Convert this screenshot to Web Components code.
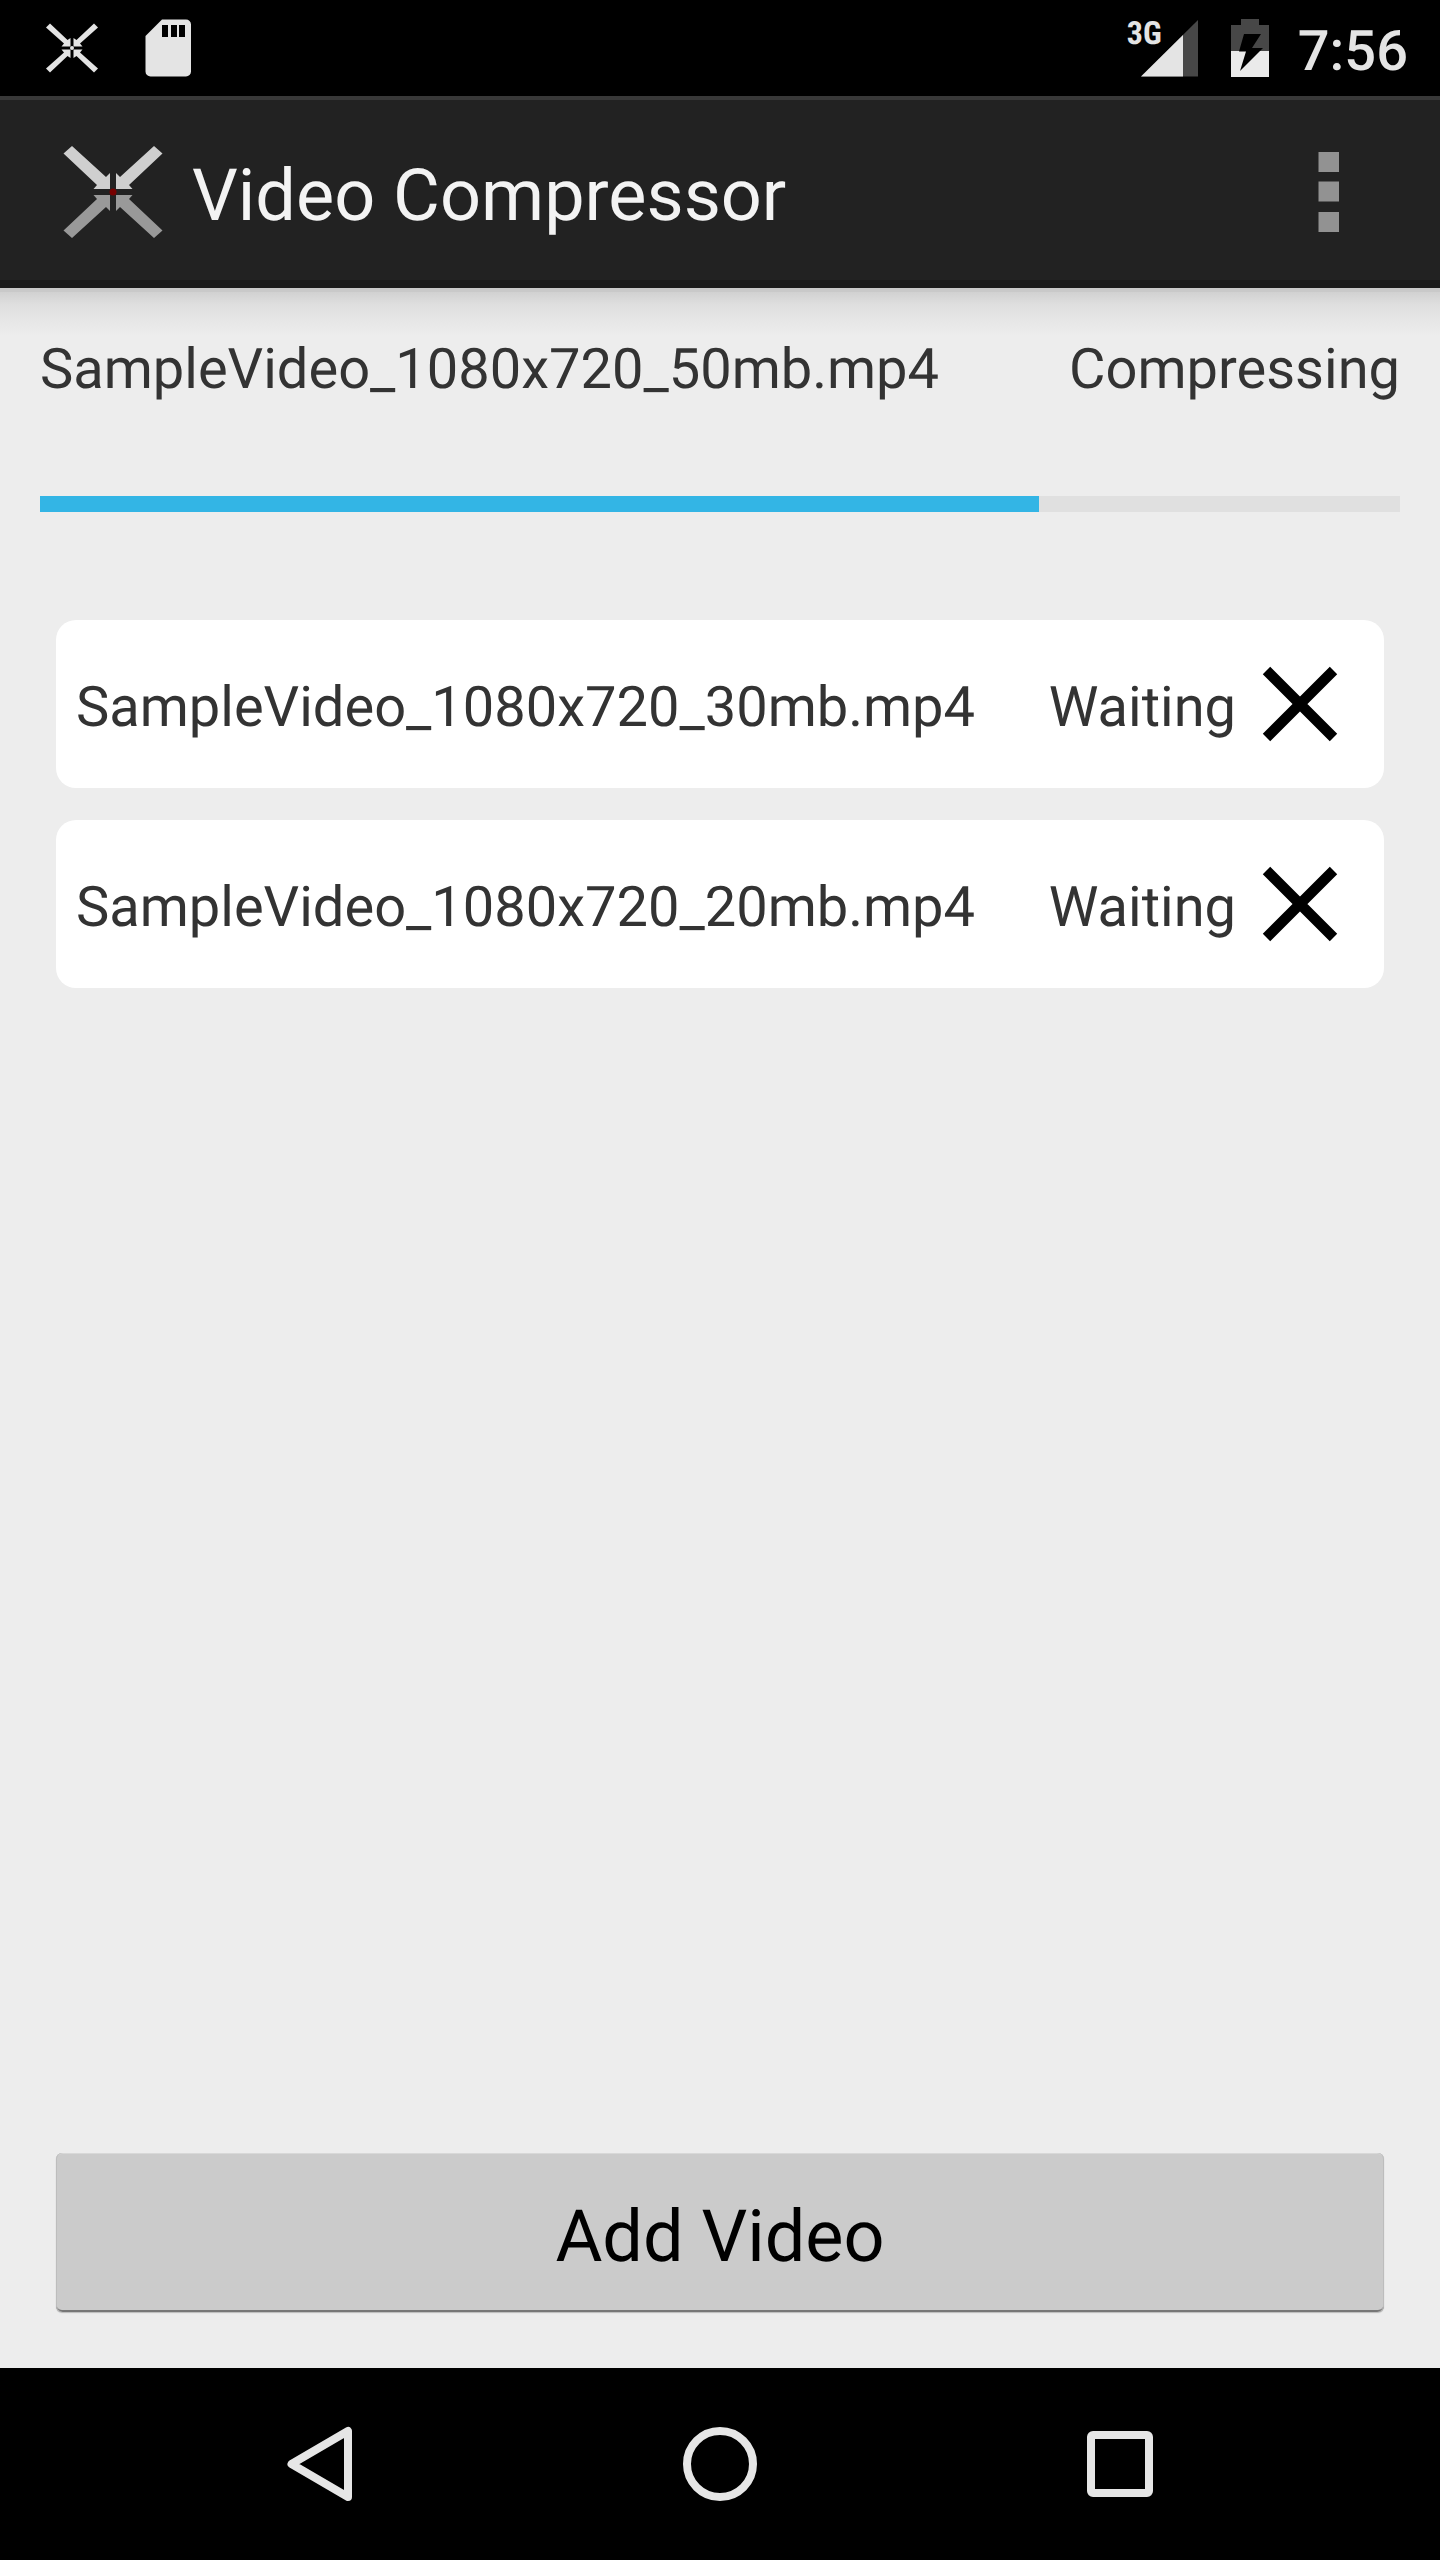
<!DOCTYPE html>
<html lang="en">
<head>
<meta charset="utf-8">
<meta name="viewport" content="width=device-width, initial-scale=1">
<title>Video Compressor</title>
<style>
  body { margin: 0; font-family: Roboto, "Noto Sans", sans-serif; text-rendering: geometricPrecision; }
</style>
</head>
<body>
<video-compressor-app></video-compressor-app>

<template id="app">
  <style>
    :host { display: flex; flex-direction: column; min-height: 100vh; background: #ededed; color: #333; font-size: 56px; line-height: 66px; }
    main { flex: 1; display: flex; flex-direction: column; padding: 42px 40px 56px; background: linear-gradient(#c9c9c9 4px, #d1d1d1 4px, #dedede 16px, #e6e6e6 32px, #ededed 48px); }
    .queue { list-style: none; margin: 108px 16px 0; padding: 0; display: flex; flex-direction: column; gap: 32px; }
    add-button { margin: auto 16px 0; }
  </style>
  <status-bar>7:56</status-bar>
  <app-bar>Video Compressor</app-bar>
  <main>
    <active-job value="999" max="1360"><span slot="name">SampleVideo_1080x720_50mb.mp4</span><span slot="state">Compressing</span></active-job>
    <ul class="queue">
      <li><queue-item><span slot="name">SampleVideo_1080x720_30mb.mp4</span><span slot="state">Waiting</span></queue-item></li>
      <li><queue-item><span slot="name">SampleVideo_1080x720_20mb.mp4</span><span slot="state">Waiting</span></queue-item></li>
    </ul>
    <add-button>Add Video</add-button>
  </main>
  <nav-bar></nav-bar>
</template>

<template id="status">
  <style>
    :host { display: flex; align-items: center; height: 96px; padding: 0 32px 0 24px; background: #000; color: #e4e4e4; }
    svg { display: block; flex: none; }
    .network { display: flex; align-items: flex-start; margin-left: auto; }
    .type { font: 700 32px/32px "Roboto Condensed", Roboto, sans-serif; margin-right: -22px; margin-top: 17px; }
    .battery { margin: 0 26px 0 28px; }
    .clock { font-weight: 500; padding-top: 6px; }
  </style>
  <svg width="96" height="96" viewBox="0 0 96 96" fill="#e4e4e4" aria-hidden="true">
    <path d="M26 23.5 43.5 40l3-2v8.500h-9l2.500-3L22 27.500z"/>
    <path d="M70 23.500 52.500 40l-3-2v8.500h9l-2.500-3L74 27.500z"/>
    <path d="M26 72.500 43.500 56l3 2v-8.500h-9l2.500 3L22 68.500z"/>
    <path d="M70 72.500 52.500 56l-3 2v-8.500h9l-2.500 3L74 68.500z"/>
    <circle cx="48" cy="48" r="2"/>
  </svg>
  <svg width="96" height="96" viewBox="0 0 96 96" aria-hidden="true">
    <path fill="#e4e4e4" fill-rule="evenodd" d="M42 19.500h24a5 5 0 0 1 5 5v47a5 5 0 0 1-5 5H30.500a5 5 0 0 1-5-5V36zM42 25v12h6V25zm9 0v12h6V25zm8 0v12h6V25z"/>
  </svg>
  <div class="network">
    <span class="type">3G</span>
    <svg width="60" height="96" viewBox="0 0 60 96" aria-hidden="true"><path fill="#474747" d="M58 20v56.500H1z"/><path fill="#e4e4e4" d="M43 35v41.500H1z"/></svg>
  </div>
  <svg class="battery" width="44" height="96" viewBox="0 0 44 96" aria-hidden="true">
    <path fill="#474747" d="M3 25h10v-6h18v6h10v26H3z"/><path fill="#eaeaea" d="M3 51h38v26H3z"/>
    <path d="M16 34h17l-9 14h11L12 71l6-19.500h-7z"/>
  </svg>
  <span class="clock"><slot></slot></span>
</template>

<template id="appbar">
  <style>
    :host { display: flex; align-items: center; gap: 16px; height: 192px; padding: 0 48px; background: #222; box-shadow: inset 0 4px #383838, inset 0 -8px #1c1c1c; box-sizing: border-box; color: #f3f3f3; }
    svg { display: block; flex: none; }
    h1 { flex: 1; margin: 0; padding-top: 8px; font-size: 72px; line-height: 84px; font-weight: 400; }
    button { border: 0; padding: 0; background: none; cursor: pointer; }
  </style>
  <svg width="128" height="128" viewBox="0 -4 128 128" aria-hidden="true">
    <g fill="#cfcfcf"><path d="M24 14 58 45l4-4v16H45.500l3.500-4L15.500 21.500z"/><path d="M106 14 72 45l-4-4v16h16.500l-3.500-4L114.500 21.500z"/></g>
    <g fill="#999"><path d="M24 106 58 75l4 4V63H45.500l3.500 4L15.500 98.500z"/><path d="M106 106 72 75l-4 4V63h16.500l-3.500 4L114.500 98.500z"/></g>
    <circle cx="65" cy="60" r="3.500" fill="#760000"/>
  </svg>
  <h1><slot></slot></h1>
  <button type="button" aria-label="More options">
    <svg width="128" height="128" viewBox="0 0 128 128" fill="#929292"><path d="M54.500 24h20.500v20H54.500zM54.500 53.500h20.500v20H54.500zM54.500 84h20.500v20H54.500z"/></svg>
  </button>
</template>

<template id="job">
  <style>
    :host { display: block; }
    .row { display: flex; justify-content: space-between; padding-top: 6px; }
    progress { display: block; width: 100%; height: 16px; margin-top: 94px; border: 0; appearance: none; background: #e0e0e0; }
    progress::-webkit-progress-bar { background: #e0e0e0; }
    progress::-webkit-progress-value { background: #33b5e5; }
  </style>
  <div class="row"><slot name="name"></slot><slot name="state"></slot></div>
  <progress aria-label="Compression progress"></progress>
</template>

<template id="item">
  <style>
    :host { display: flex; align-items: center; padding: 20px; border-radius: 20px; background: #fff; }
    .name, .state { padding-top: 6px; }
    .name { flex: 1; }
    button { border: 0; padding: 0; background: none; cursor: pointer; }
    svg { display: block; }
  </style>
  <span class="name"><slot name="name"></slot></span>
  <span class="state"><slot name="state"></slot></span>
  <button type="button" aria-label="Remove from queue">
    <svg width="128" height="128" viewBox="0 0 128 128" fill="none" stroke="#000" stroke-width="10.500"><path d="M30.500 30.500l67 67m0-67l-67 67"/></svg>
  </button>
</template>

<template id="add">
  <style>
    :host { display: block; }
    button { display: block; width: 100%; padding: 42px 0 33px; border: 0; border-radius: 6px; background: #cbcbcb; color: #000; font: inherit; font-size: 72px; line-height: 84px; text-rendering: inherit; box-shadow: inset 1px 0 #bdbdbd, inset -1px 0 #bdbdbd, inset 0 1px #d8d8d8, inset 0 -2px #777, 0 1px 1px #bbb; cursor: pointer; }
  </style>
  <button type="button"><slot></slot></button>
</template>

<template id="nav">
  <style>
    :host { display: block; background: #000; }
    nav { display: flex; padding: 0 8.333%; }
    button { flex: 1; display: flex; justify-content: center; padding: 48px 0; border: 0; background: none; cursor: pointer; }
    svg { display: block; fill: none; stroke: #e6e6e6; stroke-width: 8; stroke-linejoin: round; }
  </style>
  <nav aria-label="System">
    <button type="button" aria-label="Back"><svg width="96" height="96" viewBox="0 0 96 96"><path d="M76 15v66L19.500 48z"/></svg></button>
    <button type="button" aria-label="Home"><svg width="96" height="96" viewBox="0 0 96 96"><circle cx="48" cy="48" r="33"/></svg></button>
    <button type="button" aria-label="Recent apps"><svg width="96" height="96" viewBox="0 0 96 96"><rect x="19" y="19" width="58" height="58" rx="2"/></svg></button>
  </nav>
</template>

<script>
  class Base extends HTMLElement {
    constructor() {
      super();
      const template = document.getElementById(this.constructor.template);
      this.attachShadow({ mode: "open" }).append(template.content.cloneNode(true));
    }
  }
  class StatusBar extends Base { static template = "status"; }
  class AppBar extends Base { static template = "appbar"; }
  class QueueItem extends Base { static template = "item"; }
  class AddButton extends Base { static template = "add"; }
  class NavBar extends Base { static template = "nav"; }
  class VideoCompressorApp extends Base { static template = "app"; }
  class ActiveJob extends Base {
    static template = "job";
    connectedCallback() {
      const bar = this.shadowRoot.querySelector("progress");
      bar.max = Number(this.getAttribute("max"));
      bar.value = Number(this.getAttribute("value"));
    }
  }
  customElements.define("status-bar", StatusBar);
  customElements.define("app-bar", AppBar);
  customElements.define("active-job", ActiveJob);
  customElements.define("queue-item", QueueItem);
  customElements.define("add-button", AddButton);
  customElements.define("nav-bar", NavBar);
  customElements.define("video-compressor-app", VideoCompressorApp);
</script>
</body>
</html>
